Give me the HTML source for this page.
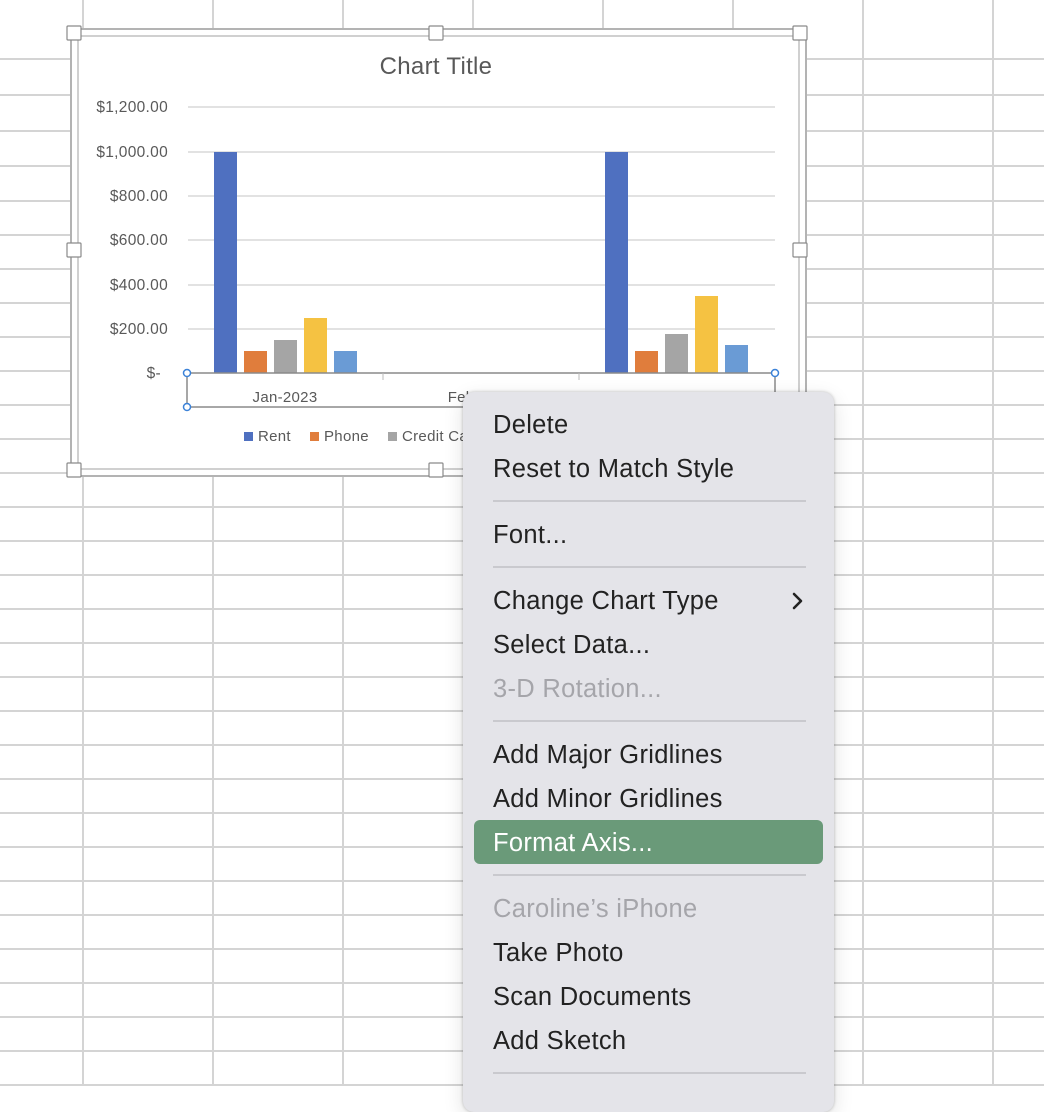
<!DOCTYPE html>
<html><head><meta charset="utf-8"><style>
html,body{margin:0;padding:0;width:1044px;height:1086px;overflow:hidden;background:#fff;font-family:"Liberation Sans",sans-serif}
svg{position:absolute;left:0;top:0}
.menu{position:absolute;left:463px;top:392px;width:371px;height:720px;background:#e4e4e9;border-radius:11px;box-shadow:0 0 3px rgba(0,0,0,.25),0 6px 20px rgba(0,0,0,.12)}
.it{position:absolute;left:30px;font-size:25.5px;letter-spacing:0.3px;color:#222;line-height:30px;white-space:nowrap}
.dis{color:#a5a5aa}
.sep{position:absolute;left:30px;width:313px;height:2px;background:#c9c9ce}
.hl{position:absolute;left:11px;width:349px;top:428px;height:44px;background:#6a9a79;border-radius:6px}
</style></head><body>
<svg width="1044" height="1086" xmlns="http://www.w3.org/2000/svg" font-family="Liberation Sans, sans-serif">
<g stroke="#d4d4d4" stroke-width="2">
<line x1="0" y1="59" x2="1044" y2="59"/><line x1="0" y1="95" x2="1044" y2="95"/><line x1="0" y1="131" x2="1044" y2="131"/>
<line x1="0" y1="166" x2="1044" y2="166"/><line x1="0" y1="201" x2="1044" y2="201"/><line x1="0" y1="235" x2="1044" y2="235"/>
<line x1="0" y1="269" x2="1044" y2="269"/><line x1="0" y1="303" x2="1044" y2="303"/><line x1="0" y1="337" x2="1044" y2="337"/>
<line x1="0" y1="371" x2="1044" y2="371"/><line x1="0" y1="405" x2="1044" y2="405"/><line x1="0" y1="439" x2="1044" y2="439"/>
<line x1="0" y1="473" x2="1044" y2="473"/><line x1="0" y1="507" x2="1044" y2="507"/><line x1="0" y1="541" x2="1044" y2="541"/>
<line x1="0" y1="575" x2="1044" y2="575"/><line x1="0" y1="609" x2="1044" y2="609"/><line x1="0" y1="643" x2="1044" y2="643"/>
<line x1="0" y1="677" x2="1044" y2="677"/><line x1="0" y1="711" x2="1044" y2="711"/><line x1="0" y1="745" x2="1044" y2="745"/>
<line x1="0" y1="779" x2="1044" y2="779"/><line x1="0" y1="813" x2="1044" y2="813"/><line x1="0" y1="847" x2="1044" y2="847"/>
<line x1="0" y1="881" x2="1044" y2="881"/><line x1="0" y1="915" x2="1044" y2="915"/><line x1="0" y1="949" x2="1044" y2="949"/>
<line x1="0" y1="983" x2="1044" y2="983"/><line x1="0" y1="1017" x2="1044" y2="1017"/><line x1="0" y1="1051" x2="1044" y2="1051"/>
<line x1="0" y1="1085" x2="1044" y2="1085"/>
<line x1="83" y1="0" x2="83" y2="1086"/><line x1="213" y1="0" x2="213" y2="1086"/><line x1="343" y1="0" x2="343" y2="1086"/>
<line x1="473" y1="0" x2="473" y2="1086"/><line x1="603" y1="0" x2="603" y2="1086"/><line x1="733" y1="0" x2="733" y2="1086"/>
<line x1="863" y1="0" x2="863" y2="1086"/><line x1="993" y1="0" x2="993" y2="1086"/>
</g>
<rect x="71" y="29" width="735" height="447" fill="#fff" stroke="#b3b3b3" stroke-width="2"/>
<rect x="78" y="36" width="721" height="433" fill="#fff" stroke="#d0d0d0" stroke-width="2"/>
<text x="436" y="74" font-size="24" letter-spacing="0.3" fill="#595959" text-anchor="middle">Chart Title</text>
<g stroke="#d9d9d9" stroke-width="1.5">
<line x1="188" y1="107" x2="775" y2="107"/><line x1="188" y1="152" x2="775" y2="152"/><line x1="188" y1="196" x2="775" y2="196"/>
<line x1="188" y1="240" x2="775" y2="240"/><line x1="188" y1="285" x2="775" y2="285"/><line x1="188" y1="329" x2="775" y2="329"/>
</g>
<g font-size="15.5" letter-spacing="0.3" fill="#595959" text-anchor="end">
<text x="168" y="112">$1,200.00</text><text x="168" y="157">$1,000.00</text><text x="168" y="201">$800.00</text>
<text x="168" y="245">$600.00</text><text x="168" y="290">$400.00</text><text x="168" y="334">$200.00</text><text x="161" y="378">$-</text>
</g>
<rect x="214" y="152" width="23" height="221" fill="#4f70c0"/>
<rect x="244" y="351" width="23" height="22" fill="#e07d3c"/>
<rect x="274" y="340" width="23" height="33" fill="#a5a5a5"/>
<rect x="304" y="318" width="23" height="55" fill="#f5c242"/>
<rect x="334" y="351" width="23" height="22" fill="#6a9bd5"/>
<rect x="605" y="152" width="23" height="221" fill="#4f70c0"/>
<rect x="635" y="351" width="23" height="22" fill="#e07d3c"/>
<rect x="665" y="334" width="23" height="39" fill="#a5a5a5"/>
<rect x="695" y="296" width="23" height="77" fill="#f5c242"/>
<rect x="725" y="345" width="23" height="28" fill="#6a9bd5"/>
<rect x="187" y="373" width="588" height="34" fill="none" stroke="#8a8a8a" stroke-width="1.5"/>
<line x1="383" y1="373" x2="383" y2="380" stroke="#bbb"/><line x1="579" y1="373" x2="579" y2="380" stroke="#bbb"/>
<g font-size="15" letter-spacing="0.3" fill="#595959" text-anchor="middle"><text x="285" y="402">Jan-2023</text><text x="481" y="402">Feb-2023</text><text x="677" y="402">Mar-2023</text></g>
<g fill="#fff" stroke="#3b82d8" stroke-width="1.5"><circle cx="187" cy="373" r="3.5"/><circle cx="775" cy="373" r="3.5"/><circle cx="187" cy="407" r="3.5"/><circle cx="775" cy="407" r="3.5"/></g>
<g font-size="15" letter-spacing="0.3" fill="#595959">
<rect x="244" y="432" width="9" height="9" fill="#4f70c0"/><text x="258" y="441">Rent</text>
<rect x="310" y="432" width="9" height="9" fill="#e07d3c"/><text x="324" y="441">Phone</text>
<rect x="388" y="432" width="9" height="9" fill="#a5a5a5"/><text x="402" y="441">Credit Card</text>
</g>
<g fill="#fff" stroke="#8a8a8a" stroke-width="1.2">
<rect x="67" y="26" width="14" height="14" rx="1"/><rect x="429" y="26" width="14" height="14" rx="1"/><rect x="793" y="26" width="14" height="14" rx="1"/>
<rect x="67" y="243" width="14" height="14" rx="1"/><rect x="793" y="243" width="14" height="14" rx="1"/>
<rect x="67" y="463" width="14" height="14" rx="1"/><rect x="429" y="463" width="14" height="14" rx="1"/>
</g>
</svg>
<div class="menu">
<div class="it" style="top:18px">Delete</div>
<div class="it" style="top:62px">Reset to Match Style</div>
<div class="sep" style="top:108px"></div>
<div class="it" style="top:128px">Font...</div>
<div class="sep" style="top:174px"></div>
<div class="it" style="top:194px">Change Chart Type</div>
<svg style="left:328px;top:200px" width="14" height="18"><path d="M3 2 L10 9 L3 16" fill="none" stroke="#222" stroke-width="2.6" stroke-linecap="round" stroke-linejoin="round"/></svg>
<div class="it" style="top:238px">Select Data...</div>
<div class="it dis" style="top:282px">3-D Rotation...</div>
<div class="sep" style="top:328px"></div>
<div class="it" style="top:348px">Add Major Gridlines</div>
<div class="it" style="top:392px">Add Minor Gridlines</div>
<div class="hl"></div>
<div class="it" style="top:436px;color:#fff">Format Axis...</div>
<div class="sep" style="top:482px"></div>
<div class="it dis" style="top:502px">Caroline’s iPhone</div>
<div class="it" style="top:546px">Take Photo</div>
<div class="it" style="top:590px">Scan Documents</div>
<div class="it" style="top:634px">Add Sketch</div>
<div class="sep" style="top:680px"></div>
</div>
</body></html>
